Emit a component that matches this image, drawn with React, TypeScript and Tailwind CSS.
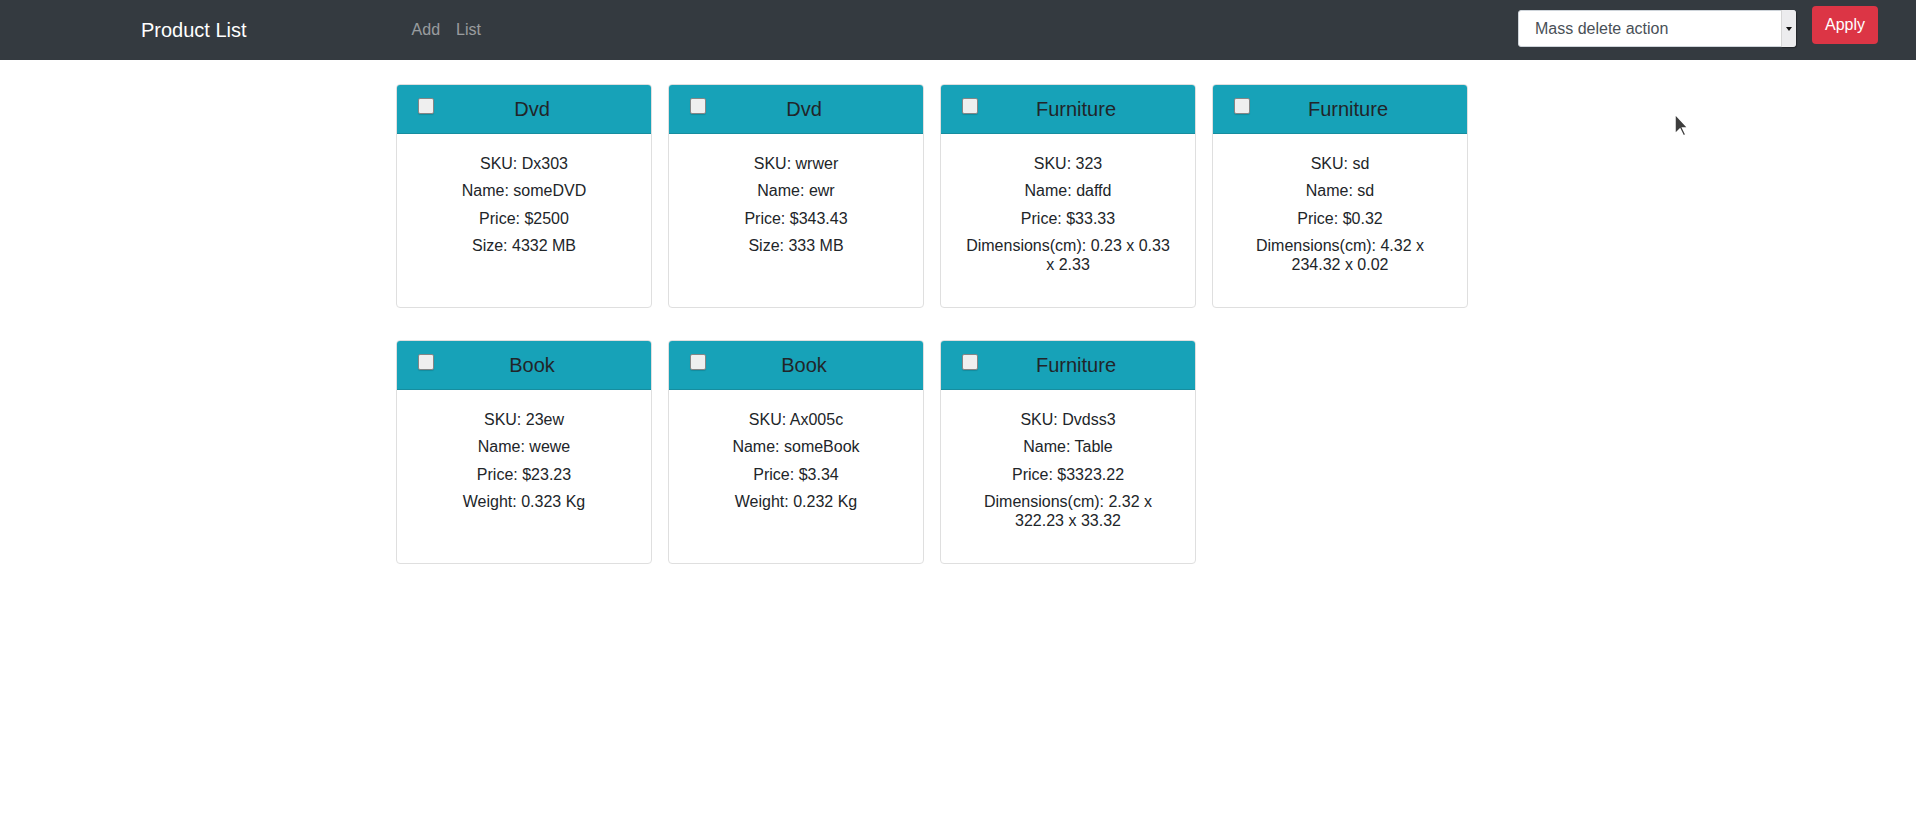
type Product = {
  type: string;
  sku: string;
  name: string;
  price: string;
  attr: string;
};

const products: Product[] = [
  { type: 'Dvd', sku: 'Dx303', name: 'someDVD', price: '$2500', attr: 'Size: 4332 MB' },
  { type: 'Dvd', sku: 'wrwer', name: 'ewr', price: '$343.43', attr: 'Size: 333 MB' },
  { type: 'Furniture', sku: '323', name: 'daffd', price: '$33.33', attr: 'Dimensions(cm): 0.23 x 0.33 x 2.33' },
  { type: 'Furniture', sku: 'sd', name: 'sd', price: '$0.32', attr: 'Dimensions(cm): 4.32 x 234.32 x 0.02' },
  { type: 'Book', sku: '23ew', name: 'wewe', price: '$23.23', attr: 'Weight: 0.323 Kg' },
  { type: 'Book', sku: 'Ax005c', name: 'someBook', price: '$3.34', attr: 'Weight: 0.232 Kg' },
  { type: 'Furniture', sku: 'Dvdss3', name: 'Table', price: '$3323.22', attr: 'Dimensions(cm): 2.32 x 322.23 x 33.32' },
];

function ProductCard({ p }: { p: Product }) {
  return (
    <div className="h-[224px] bg-white border border-[#dfdfdf] rounded-[4px] overflow-hidden">
      <div className="h-[49px] bg-[#17a2b8] border-b border-[#168d9f] flex items-start px-[21px]">
        <input
          type="checkbox"
          className="appearance-none mt-[13px] w-4 h-4 shrink-0 rounded-[2px] border border-[#858585] bg-[#efefef] shadow-[0_1px_1px_rgba(0,0,0,0.15)]"
        />
        <h5 className="flex-1 text-center text-[20px] leading-[48px] text-[#212529]">{p.type}</h5>
      </div>
      <div className="px-5 pt-[21px] pb-5 text-center text-[16px] leading-[18.4px] text-[#212529] flex flex-col gap-[9px]">
        <p>SKU: {p.sku}</p>
        <p>Name: {p.name}</p>
        <p>Price: {p.price}</p>
        <p>{p.attr}</p>
      </div>
    </div>
  );
}

export default function App() {
  return (
    <div className="relative min-h-screen bg-white font-['Liberation_Sans',Arial,sans-serif]">
      {/* navbar */}
      <nav className="h-[60px] bg-[#343a40] flex items-center">
        <a className="ml-[141px] text-[20px] text-white">Product List</a>
        <ul className="ml-[157px] flex text-[16px] text-white/50">
          <li className="px-2">Add</li>
          <li className="px-2">List</li>
        </ul>

        <div className="ml-auto flex items-start self-start mr-[38px]">
          <div className="relative mt-[10px] w-[278px] h-[37px]">
            <select className="appearance-none w-full h-full bg-white rounded-[3px] border border-[#ced4da] pl-[16px] text-[16px] text-[#495057] outline-none">
              <option>Mass delete action</option>
            </select>
            <div className="absolute right-0 top-0 bottom-0 w-[15px] bg-[#ececee] border-l border-[#d6d6d6] rounded-r-[3px] shadow-[1px_1px_1px_rgba(0,0,0,0.35)] flex items-center justify-center pointer-events-none">
              <svg width="6" height="4" viewBox="0 0 6 4">
                <path d="M0 0h6L3 4z" fill="#111" />
              </svg>
            </div>
          </div>
          <button className="ml-4 mt-[6px] h-[38px] px-[13px] rounded-[4px] bg-[#dc3545] text-white text-[16px]">
            Apply
          </button>
        </div>
      </nav>

      {/* product grid */}
      <main className="pt-6 pl-[396px]">
        <div className="grid grid-cols-[repeat(4,256px)] gap-x-[16px] gap-y-[32px]">
          {products.map((p) => (
            <ProductCard key={p.sku} p={p} />
          ))}
        </div>
      </main>

      {/* mouse pointer left in the screenshot */}
      <svg className="absolute left-[1673px] top-[112px]" width="16" height="26" viewBox="0 0 16 26">
        <path d="M2 2v20l5-5 3.5 7 2.5-1.2-3.4-6.8H15z" fill="#3d3d3d" stroke="#fff" strokeWidth="1.5" />
      </svg>
    </div>
  );
}
